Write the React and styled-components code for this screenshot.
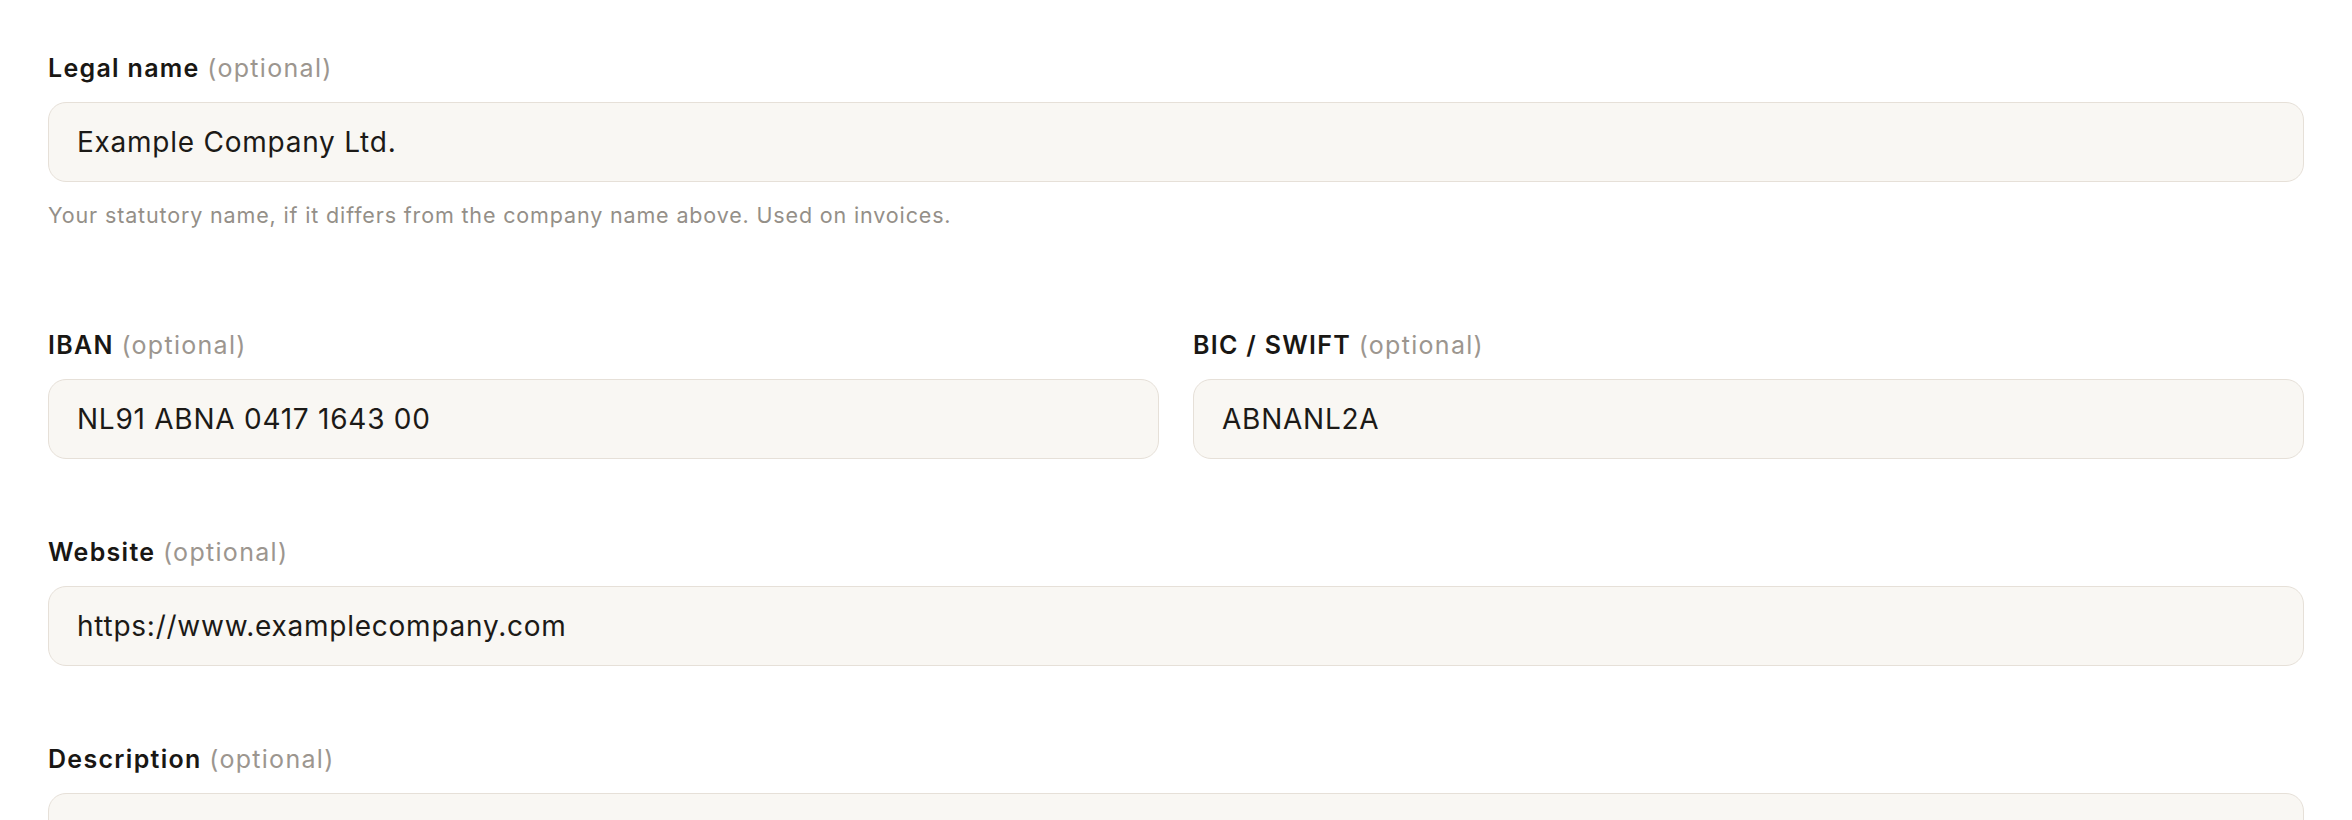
import React from 'react';
import styled, { createGlobalStyle } from 'styled-components';

const GlobalStyle = createGlobalStyle`
  * {
    box-sizing: border-box;
  }

  body {
    margin: 0;
    background: #ffffff;
    font-family: Inter, "Liberation Sans", sans-serif;
    color: #1c1a17;
  }
`;

const Form = styled.form`
  padding: 50px 48px 0;
  display: flex;
  flex-direction: column;
`;

const Field = styled.div`
  display: flex;
  flex-direction: column;
  margin-bottom: ${props => props.gap || 75}px;
`;

const Row = styled.div`
  display: grid;
  grid-template-columns: 1fr 1fr;
  column-gap: 34px;
`;

const Label = styled.label`
  font-size: 25px;
  line-height: 36px;
  font-weight: 600;
  letter-spacing: 1.3px;
  color: #191714;
  margin-bottom: 16px;
`;

const Optional = styled.span`
  font-weight: 400;
  color: #9c968f;
`;

const TextInput = styled.input`
  width: 100%;
  height: 80px;
  padding: 0 28px;
  border: 1.5px solid #e6e0d8;
  border-radius: 18px;
  background: #f9f7f3;
  font-family: inherit;
  font-size: 28px;
  letter-spacing: 0.75px;
  color: #1c1a17;
  outline: none;
`;

const TextArea = styled.textarea`
  width: 100%;
  height: 180px;
  padding: 24px 28px;
  border: 1.5px solid #e6e0d8;
  border-radius: 18px;
  background: #f9f7f3;
  font-family: inherit;
  font-size: 28px;
  letter-spacing: 0.75px;
  color: #1c1a17;
  resize: none;
  outline: none;
`;

const Help = styled.p`
  margin: 17.5px 0 0;
  font-size: 21.5px;
  line-height: 31.5px;
  letter-spacing: 0.85px;
  color: #948f88;
`;

const FormField = ({ label, children, help, gap }) => (
  <Field gap={gap}>
    <Label>
      {label} <Optional>(optional)</Optional>
    </Label>
    {children}
    {help && <Help>{help}</Help>}
  </Field>
);

const App = () => {
  return (
    <>
      <GlobalStyle />
      <Form onSubmit={e => e.preventDefault()}>
        <FormField
          label="Legal name"
          gap={96}
          help="Your statutory name, if it differs from the company name above. Used on invoices."
        >
          <TextInput defaultValue="Example Company Ltd." />
        </FormField>

        <Row>
          <FormField label="IBAN">
            <TextInput defaultValue="NL91 ABNA 0417 1643 00" />
          </FormField>
          <FormField label="BIC / SWIFT">
            <TextInput defaultValue="ABNANL2A" />
          </FormField>
        </Row>

        <FormField label="Website">
          <TextInput defaultValue="https://www.examplecompany.com" />
        </FormField>

        <FormField label="Description">
          <TextArea defaultValue="" />
        </FormField>
      </Form>
    </>
  );
};

export default App;
